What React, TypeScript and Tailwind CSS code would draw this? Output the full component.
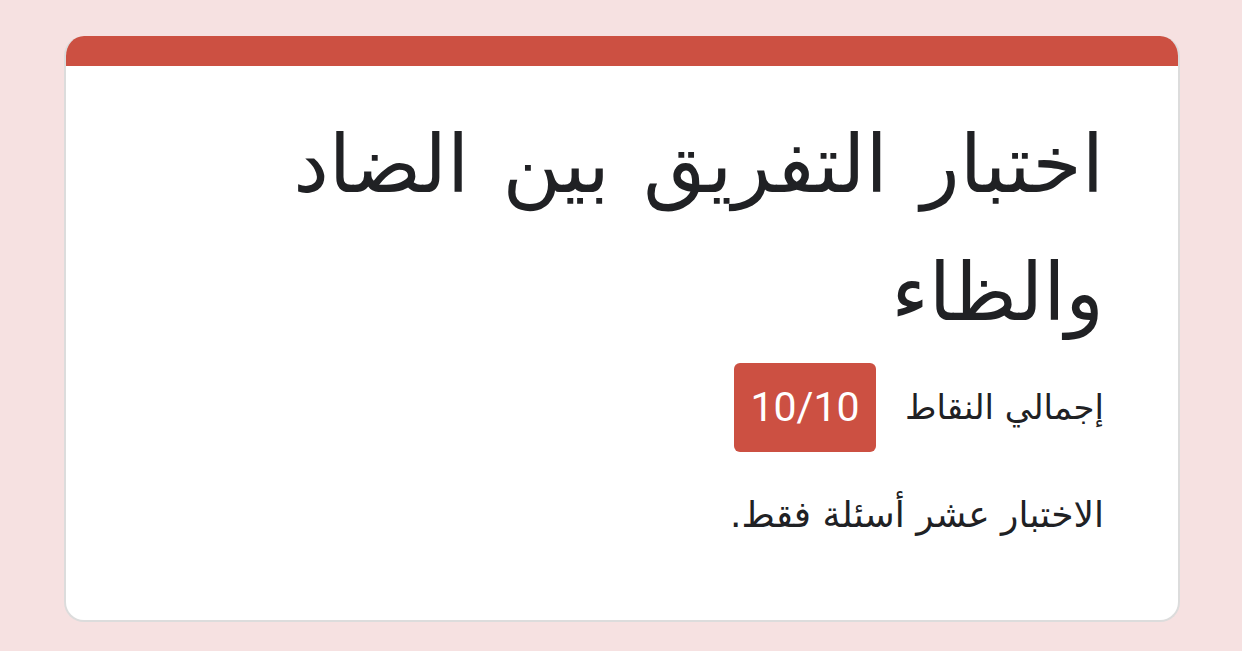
import React from "react";

const App = () => {
  return (
    <div className="min-h-screen w-full bg-[#f6e1e1] pt-9 pl-16 pr-[62px]">
      <div
        dir="rtl"
        className="h-[586px] w-[1116px] overflow-hidden rounded-[20px] border-2 border-t-0 border-[#dcdcdc] bg-white"
        style={{ fontFamily: '"DejaVu Sans", "Noto Sans", sans-serif' }}
      >
        <div className="-mx-[2px] h-[30px] bg-[#cc5042]" />
        <div className="pr-[74px] pl-[76px] pt-[35px]">
          <h1 className="text-[80px] leading-[128px] [word-spacing:8px] text-[#202124]">
            اختبار التفريق بين الضاد والظاء
          </h1>
          <div className="mt-[6px] flex items-center gap-[29px]">
            <span className="text-[34px] text-[#202124]">إجمالي النقاط</span>
            <span
              dir="ltr"
              className="flex h-[89px] w-[142px] items-center justify-center rounded-[6px] bg-[#cc5042] text-[41px] text-white"
              style={{ fontFamily: "Roboto, sans-serif" }}
            >
              10/10
            </span>
          </div>
          <p className="mt-[36px] text-[36px] text-[#202124]">
            الاختبار عشر أسئلة فقط.
          </p>
        </div>
      </div>
    </div>
  );
};

export default App;
